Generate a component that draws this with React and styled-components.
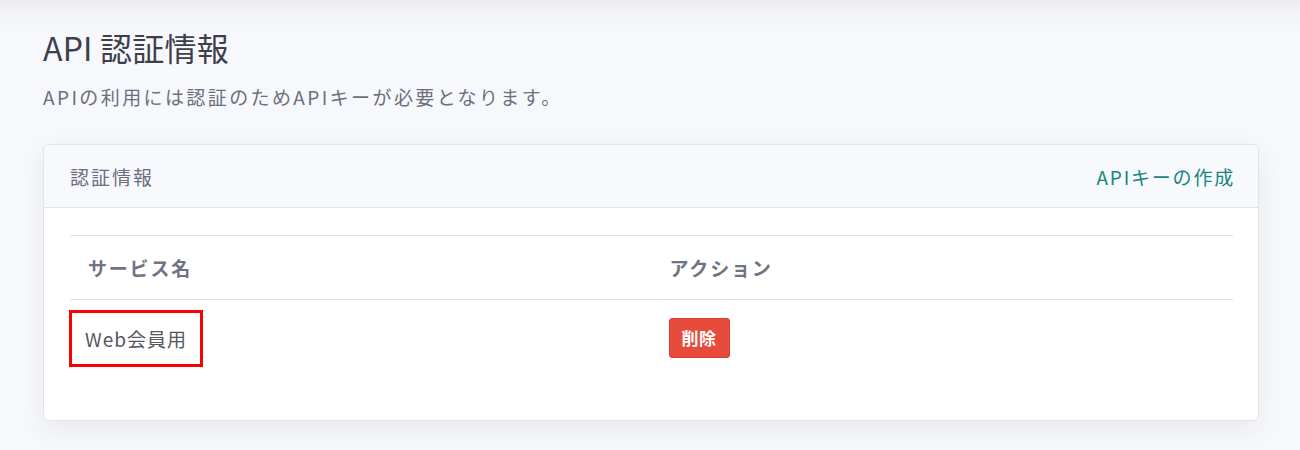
import React from "react";
import styled, { createGlobalStyle } from "styled-components";

const GlobalStyle = createGlobalStyle`
  html, body {
    margin: 0;
    padding: 0;
  }
  body {
    background: linear-gradient(to bottom, #ebebee 0px, #f3f4f7 14px, #f7f8fb 30px, #f7f8fb 100%);
    min-height: 450px;
    font-family: "Noto Sans CJK JP", "Noto Sans", sans-serif;
  }
`;

const Page = styled.main`
  padding: 24px 41px 30px 43px;
`;

const Title = styled.h1`
  margin: 0;
  font-size: 32px;
  line-height: 46px;
  font-weight: 400;
  color: #3d404c;
  letter-spacing: 0.2px;
`;

const Lead = styled.p`
  margin: 14px 0 0;
  font-size: 19px;
  line-height: 26px;
  letter-spacing: 2.4px;
  color: #6c6f7e;
`;

const Card = styled.section`
  margin-top: 34px;
  background: #fff;
  border: 1px solid #e2e4ec;
  border-radius: 6px;
  box-shadow: 0 8px 26px rgba(40, 45, 80, 0.07);
  overflow: hidden;
`;

const CardHeader = styled.header`
  display: flex;
  align-items: center;
  justify-content: space-between;
  height: 62px;
  padding: 0 25px 0 26px;
  background: #f8f9fc;
  border-bottom: 1px solid #dfe1ee;
`;

const CardTitle = styled.h2`
  margin: 0;
  font-size: 19px;
  letter-spacing: 2px;
  font-weight: 400;
  color: #6b6e7f;
`;

const CreateLink = styled.a`
  font-size: 19px;
  letter-spacing: 1.8px;
  margin-right: -2px;
  color: #17867f;
  text-decoration: none;
  cursor: pointer;
`;

const CardBody = styled.div`
  padding: 27px 25px 46px 26px;
`;

const Table = styled.div`
  display: grid;
  grid-template-columns: 1fr 1fr;
  border-top: 1px solid #dfe1ee;
`;

const HeadCell = styled.div`
  display: flex;
  align-items: center;
  height: 63px;
  padding-left: 18px;
  font-size: 19px;
  letter-spacing: 1.8px;
  font-weight: 700;
  color: #6f7384;
  border-bottom: 1px solid #dfe1ee;
`;

const Cell = styled.div`
  display: flex;
  align-items: center;
  height: 74px;
  padding-left: ${(p) => (p.$flush ? "0" : "17px")};
  font-size: 19px;
  letter-spacing: 1px;
  color: #555760;
`;

const Highlight = styled.span`
  display: inline-flex;
  align-items: center;
  box-sizing: border-box;
  margin-left: -1px;
  height: 57px;
  padding: 0 13px 0 13px;
  border: 3px solid #ff0000;
  margin-top: 2px;
`;

const DangerButton = styled.button`
  font-family: inherit;
  font-size: 17px;
  letter-spacing: 0.5px;
  font-weight: 700;
  color: #fff;
  background: #e64b3b;
  border: 1px solid #d9402f;
  border-radius: 3px;
  height: 40px;
  padding: 0 12px 0 12px;
  margin-top: 1px;
  cursor: pointer;
`;

export default function App() {
  return (
    <>
      <GlobalStyle />
      <Page>
        <Title>API 認証情報</Title>
        <Lead>APIの利用には認証のためAPIキーが必要となります。</Lead>
        <Card>
          <CardHeader>
            <CardTitle>認証情報</CardTitle>
            <CreateLink>APIキーの作成</CreateLink>
          </CardHeader>
          <CardBody>
            <Table>
              <HeadCell>サービス名</HeadCell>
              <HeadCell>アクション</HeadCell>
              <Cell $flush>
                <Highlight>Web会員用</Highlight>
              </Cell>
              <Cell>
                <DangerButton>削除</DangerButton>
              </Cell>
            </Table>
          </CardBody>
        </Card>
      </Page>
    </>
  );
}
